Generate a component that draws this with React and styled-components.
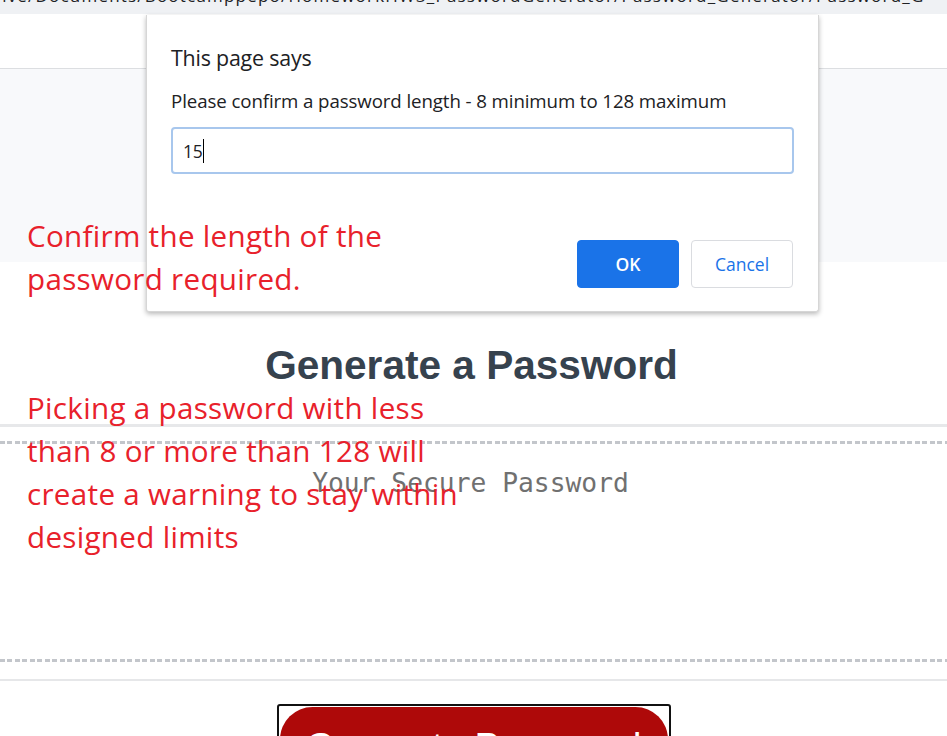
import React from "react";
import styled, { createGlobalStyle } from "styled-components";

const GlobalStyle = createGlobalStyle`
  html, body {
    margin: 0;
    padding: 0;
    background: #ffffff;
    overflow: hidden;
  }
  body {
    font-family: "Open Sans", "Liberation Sans", sans-serif;
  }
`;

const Screen = styled.div`
  position: relative;
  width: 947px;
  height: 736px;
  overflow: hidden;
  display: flex;
  flex-direction: column;
`;

// browser address strip, only the bottom of the url is still in frame
const AddressStrip = styled.div`
  height: 14px;
  flex: none;
  background: #eff1f4;
  overflow: hidden;
  white-space: nowrap;
  color: #202124;
  font-family: "Open Sans", sans-serif;
  font-size: 17px;
  line-height: 22px;
  letter-spacing: 1.2px;

  span {
    display: block;
    margin-top: -15px;
    margin-left: -6px;
  }
`;

const TopBand = styled.div`
  height: 54px;
  flex: none;
  background: #ffffff;
  border-bottom: 1px solid #dcdee1;
`;

const GrayPanel = styled.div`
  height: 193px;
  flex: none;
  background: #f8f9fb;
`;

const CardHeader = styled.div`
  padding: 79px 0 35px;
  border-bottom: 3px solid #e7e8ea;
  text-align: center;
`;

const Title = styled.h2`
  margin: 0;
  padding-right: 4px;
  font-family: "Liberation Sans", Arial, sans-serif;
  font-weight: 700;
  font-size: 40.6px;
  line-height: 48px;
  color: #36424e;
`;

const CardBody = styled.div`
  padding: 14px 0 17px;
`;

const PasswordBox = styled.div`
  height: 221px;
  box-sizing: border-box;
  padding: 24px 6px 0 0;
  text-align: center;
  font-family: "DejaVu Sans Mono", "Liberation Mono", monospace;
  font-size: 26.3px;
  line-height: 36px;
  color: #707070;
  background:
    repeating-linear-gradient(90deg, #c3c6cb 0 5px, transparent 5px 7.5px) top / 100% 3px no-repeat,
    repeating-linear-gradient(90deg, #c3c6cb 0 5px, transparent 5px 7.5px) bottom / 100% 3px no-repeat;
`;

const CardFooter = styled.div`
  border-top: 2px solid #e6e7e9;
  padding-top: 23px;
  display: flex;
  justify-content: center;
`;

const GenerateFrame = styled.div`
  width: 394px;
  height: 70px;
  box-sizing: border-box;
  border: 2px solid #111111;
  border-radius: 3px;
  padding: 1px 1px 0;
  background: #ffffff;
`;

const GenerateButton = styled.button`
  display: block;
  width: 100%;
  height: 100%;
  border: none;
  border-radius: 34px;
  background: #ae0909;
  color: #ffffff;
  font-family: "Liberation Sans", Arial, sans-serif;
  font-size: 38px;
  padding-top: 17px;
  cursor: pointer;
`;

// the browser prompt() lying over the page
const Dialog = styled.div`
  position: absolute;
  left: 146px;
  top: 15px;
  width: 673px;
  height: 297px;
  box-sizing: border-box;
  background: #ffffff;
  border: 1px solid #d6d6d6;
  border-top: none;
  border-radius: 0 0 3px 3px;
  box-shadow: 0 2px 5px rgba(0, 0, 0, 0.28);
  padding: 28px 24px 0 24px;
  display: flex;
  flex-direction: column;
  font-family: "Open Sans", sans-serif;
  color: #202124;
`;

const DialogTitle = styled.div`
  font-size: 21.4px;
  line-height: 30px;
  letter-spacing: -0.2px;
`;

const DialogMessage = styled.div`
  margin-top: 16px;
  font-size: 18.7px;
  line-height: 24px;
  letter-spacing: -0.1px;
`;

const PromptInput = styled.div`
  margin-top: 14px;
  height: 47px;
  box-sizing: border-box;
  border: 2px solid #a8c7ed;
  border-radius: 4px;
  padding: 0 10px;
  display: flex;
  align-items: center;
  font-size: 17.5px;
  letter-spacing: -0.3px;
`;

const Caret = styled.span`
  display: inline-block;
  width: 1px;
  height: 24px;
  background: #000000;
  margin-left: 1px;
`;

const DialogActions = styled.div`
  margin-top: auto;
  margin-bottom: 23px;
  margin-right: 1px;
  display: flex;
  justify-content: flex-end;
  gap: 12px;
`;

const DialogButton = styled.button`
  width: 102px;
  height: 48px;
  box-sizing: border-box;
  border-radius: 4px;
  font-family: "Open Sans", sans-serif;
  font-size: 17.5px;
  font-weight: ${(p) => (p.$primary ? 600 : 500)};
  border: 1px solid ${(p) => (p.$primary ? "#1a73e8" : "#dadce0")};
  background: ${(p) => (p.$primary ? "#1a73e8" : "#ffffff")};
  color: ${(p) => (p.$primary ? "#ffffff" : "#1a73e8")};
  cursor: pointer;
`;

// red annotation notes drawn on top of the capture
const Note = styled.div`
  position: absolute;
  left: 27px;
  top: ${(p) => p.$top}px;
  width: ${(p) => p.$width}px;
  font-family: "Open Sans", sans-serif;
  font-size: 29.6px;
  line-height: 43px;
  letter-spacing: 0.3px;
  color: #e8212b;
`;

export default function App() {
  return (
    <>
      <GlobalStyle />
      <Screen>
        <AddressStrip>
          <span>
            rive/Documents/Bootcamppepo/HomeworkHW3_PasswordGenerator/Password_Generator/Password_G
          </span>
        </AddressStrip>
        <TopBand />
        <GrayPanel />
        <CardHeader>
          <Title>Generate a Password</Title>
        </CardHeader>
        <CardBody>
          <PasswordBox>Your Secure Password</PasswordBox>
        </CardBody>
        <CardFooter>
          <GenerateFrame>
            <GenerateButton>Generate Password</GenerateButton>
          </GenerateFrame>
        </CardFooter>

        <Dialog>
          <DialogTitle>This page says</DialogTitle>
          <DialogMessage>
            Please confirm a password length - 8 minimum to 128 maximum
          </DialogMessage>
          <PromptInput>
            15
            <Caret />
          </PromptInput>
          <DialogActions>
            <DialogButton $primary>OK</DialogButton>
            <DialogButton>Cancel</DialogButton>
          </DialogActions>
        </Dialog>

        <Note $top={214} $width={440}>
          Confirm the length of the
          <br />
          password required.
        </Note>
        <Note $top={386} $width={480}>
          Picking a password with less
          <br />
          than 8 or more than 128 will
          <br />
          create a warning to stay within
          <br />
          designed limits
        </Note>
      </Screen>
    </>
  );
}
